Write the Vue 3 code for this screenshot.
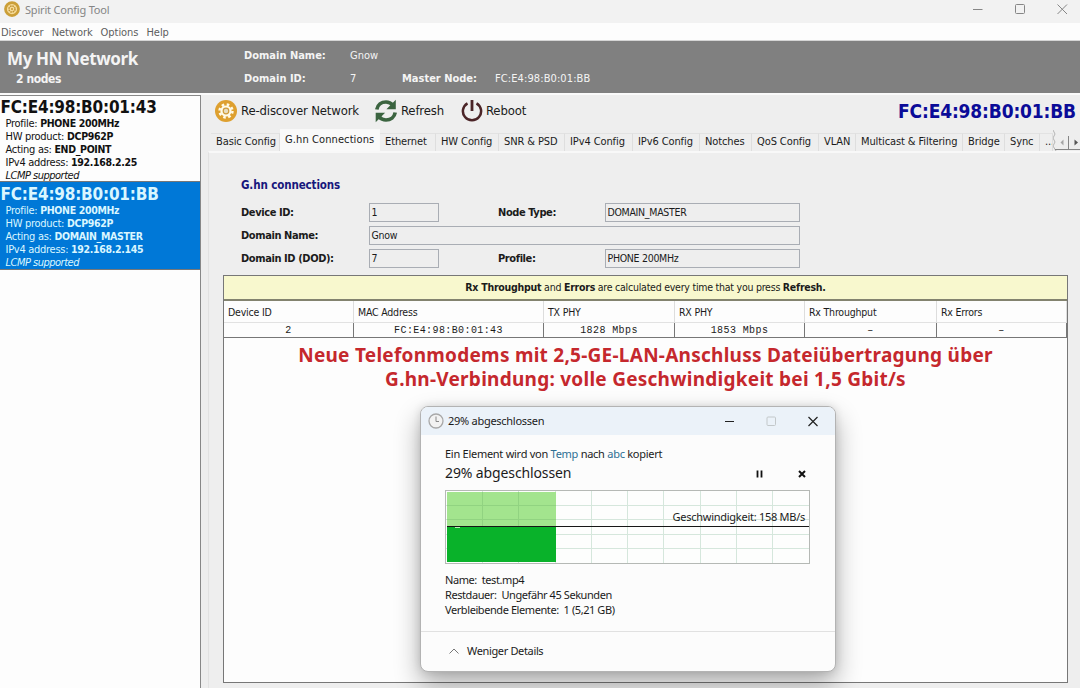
<script setup>
const menus = ['Discover', 'Network', 'Options', 'Help']

const nodes = [
  {
    mac: 'FC:E4:98:B0:01:43',
    role: 'END_POINT',
    ip: '192.168.2.25',
    selected: false,
  },
  {
    mac: 'FC:E4:98:B0:01:BB',
    role: 'DOMAIN_MASTER',
    ip: '192.168.2.145',
    selected: true,
  },
]

const tabs = [
  'Basic Config',
  'G.hn Connections',
  'Ethernet',
  'HW Config',
  'SNR & PSD',
  'IPv4 Config',
  'IPv6 Config',
  'Notches',
  'QoS Config',
  'VLAN',
  'Multicast & Filtering',
  'Bridge',
  'Sync',
  '...',
]
const activeTab = 'G.hn Connections'

const columns = ['Device ID', 'MAC Address', 'TX PHY', 'RX PHY', 'Rx Throughput', 'Rx Errors']
const connection = ['2', 'FC:E4:98:B0:01:43', '1828 Mbps', '1853 Mbps', '–', '–']
</script>

<template>
  <div class="window">
    <header class="titlebar">
      <svg class="app-icon" viewBox="0 0 32 32">
        <circle cx="16" cy="16" r="13" fill="#f6dc9c" stroke="#cb9f38" stroke-width="5.5" />
        <circle cx="16" cy="16" r="6" fill="none" stroke="#c09434" stroke-width="3" stroke-dasharray="3.2 1.5" />
        <circle cx="16" cy="16" r="2" fill="#c8982c" />
      </svg>
      <span class="title">Spirit Config Tool</span>
      <svg class="window-buttons" viewBox="0 0 100 12" fill="none" stroke="#868686">
        <path d="M1 6.5h9.5" />
        <rect x="43.5" y="1.5" width="9" height="9" rx="1" />
        <path d="M85.5 1.5l9.5 9.5M95 1.5l-9.5 9.5" />
      </svg>
    </header>

    <nav class="menubar">
      <span v-for="menu in menus" :key="menu">{{ menu }}</span>
    </nav>

    <section class="network">
      <div class="network-name">
        <h1>My HN Network</h1>
        <strong>2 nodes</strong>
      </div>
      <dl class="network-info">
        <dt>Domain Name:</dt>
        <dd>Gnow</dd>
        <dt class="row-two">Domain ID:</dt>
        <dd>7</dd>
        <dt>Master Node:</dt>
        <dd class="master">FC:E4:98:B0:01:BB</dd>
      </dl>
    </section>

    <div class="workspace">
      <aside class="node-list">
        <article v-for="node in nodes" :key="node.mac" class="node" :class="{ selected: node.selected }">
          <h2>{{ node.mac }}</h2>
          <p>Profile: <b>PHONE 200MHz</b></p>
          <p>HW product: <b>DCP962P</b></p>
          <p>Acting as: <b>{{ node.role }}</b></p>
          <p>IPv4 address: <b>{{ node.ip }}</b></p>
          <p class="lcmp">LCMP supported</p>
        </article>
      </aside>

      <main class="content">
        <div class="toolbar">
          <button type="button" class="discover">
            <svg width="24" height="24" viewBox="0 0 24 24">
              <circle cx="12" cy="12" r="11" fill="#dea02f" />
              <circle cx="12" cy="12" r="5.6" fill="#fffbe9" />
              <circle cx="12" cy="12" r="6.5" fill="none" stroke="#fffbe9" stroke-width="2.4" stroke-dasharray="2.55 2.55" />
              <circle cx="12" cy="12" r="2.8" fill="#e8ddc0" stroke="#cf9b3a" stroke-width="1.2" />
            </svg>
            <span>Re-discover Network</span>
          </button>
          <button type="button" class="refresh">
            <svg width="24" height="24" viewBox="0 0 24 24">
              <g fill="none" stroke="#3b6440" stroke-width="3.7">
                <path d="M2.8 10.5C3.6 5.8 7.4 3 12 3c3 0 5.2 1.2 7 3.2" />
                <path d="M21.2 13.5C20.4 18.2 16.6 21 12 21c-3 0-5.2-1.2-7-3.2" />
              </g>
              <path d="M21.8 0.8v9.4h-9.4zM1.7 23.2v-9.4h9.4z" fill="#3b6440" />
            </svg>
            <span>Refresh</span>
          </button>
          <button type="button" class="reboot">
            <svg width="22" height="24" viewBox="0 0 22 24" fill="none" stroke="#4b2427">
              <path d="M6.5 4.300a9.100 9.100 0 1 0 9 0" stroke-width="2.5" />
              <path d="M11 1v11" stroke-width="2.8" />
            </svg>
            <span>Reboot</span>
          </button>
          <strong class="current-mac">FC:E4:98:B0:01:BB</strong>
        </div>

        <div class="tabs">
          <span v-for="tab in tabs" :key="tab" class="tab" :class="{ active: tab === activeTab }">{{ tab }}</span>
          <svg class="tab-scroll" width="28" height="22" viewBox="0 0 28 22">
            <path d="M0 0l2 4-2 4 2 4-2 4 3 5" fill="none" stroke="#b5b5b5" />
            <path d="M2 19.500h26M15.500 6v13" fill="none" stroke="#858585" />
            <path d="M10.500 9.500v6l-3-3z" fill="#a5a5a5" />
            <path d="M21.500 9.500v6l3.500-3z" fill="#555" />
          </svg>
        </div>

        <div class="pane">
          <h3>G.hn connections</h3>
          <form class="details" @submit.prevent>
            <label>Device ID:</label>
            <output>1</output>
            <label class="second">Node Type:</label>
            <output>DOMAIN_MASTER</output>
            <label>Domain Name:</label>
            <output class="wide">Gnow</output>
            <label>Domain ID (DOD):</label>
            <output>7</output>
            <label class="second">Profile:</label>
            <output>PHONE 200MHz</output>
          </form>

          <section class="results">
            <p class="notice">
              <b>Rx Throughput</b> and <b>Errors</b> are calculated every time that you press <b>Refresh.</b>
            </p>
            <div class="grid head">
              <span v-for="column in columns" :key="column">{{ column }}</span>
            </div>
            <div class="grid row">
              <span v-for="(cell, index) in connection" :key="index">{{ cell }}</span>
            </div>
            <p class="caption">
              Neue Telefonmodems mit 2,5-GE-LAN-Anschluss Dateiübertragung über<br />
              G.hn-Verbindung: volle Geschwindigkeit bei 1,5 Gbit/s
            </p>
          </section>
        </div>
      </main>
    </div>

    <section class="dialog">
      <header class="dialog-title">
        <svg width="16" height="16" viewBox="0 0 16 16">
          <circle cx="8" cy="8" r="7" fill="#f2f2f2" stroke="#a8a8a8" stroke-width="1.3" />
          <path d="M8 3.5v5h3" fill="none" stroke="#8a8a8a" />
        </svg>
        <span>29% abgeschlossen</span>
        <svg class="dialog-buttons" width="96" height="12" viewBox="0 0 96 12" fill="none">
          <path d="M1 6.5h9" stroke="#222" />
          <rect x="43" y="2" width="8.5" height="8.5" rx="1" stroke="#c3c8ca" />
          <path d="M84.5 2l9 9M93.5 2l-9 9" stroke="#222" stroke-width="1.2" />
        </svg>
      </header>

      <div class="dialog-body">
        <p class="source">Ein Element wird von <a>Temp</a> nach <a>abc</a> kopiert</p>
        <div class="progress">
          <span>29% abgeschlossen</span>
          <svg width="52" height="10" viewBox="0 0 52 10" fill="none" stroke="#111">
            <path d="M1.5 1.5v7M5.5 1.5v7" stroke-width="1.8" />
            <path d="M43 2l6 6M49 2l-6 6" stroke-width="2" />
          </svg>
        </div>
        <div class="chart">
          <svg width="366" height="74" viewBox="0 0 366 74">
            <rect width="365" height="74" fill="#fdfefd" />
            <path
              d="M37.5 0v73M73.5 0v73M110.5 0v73M146.5 0v73M182.5 0v73M218.5 0v73M255.5 0v73M291.5 0v73M327.5 0v73M0 15.5h364M0 29.5h364M0 44.5h364M0 58.5h364"
              fill="none"
              stroke="#d5e7dc"
            />
            <rect x="2" y="2" width="109" height="35" fill="#a3e48e" />
            <path d="M37.5 2v35M73.5 2v35M2 15.5h109M2 29.5h109" stroke="#91d381" />
            <rect x="2" y="37" width="109" height="35" fill="#09b22a" />
            <rect x=".5" y=".5" width="364" height="73" fill="none" stroke="#b5b9b5" />
            <path d="M2 36.5h362" stroke="#161616" />
            <path d="M10 37.5h5" stroke="#b9efb9" />
          </svg>
          <span class="speed">Geschwindigkeit: 158 MB/s</span>
        </div>
        <div class="file-info">
          <p>Name:&nbsp; test.mp4</p>
          <p>Restdauer:&nbsp; Ungefähr 45 Sekunden</p>
          <p>Verbleibende Elemente:&nbsp; 1 (5,21 GB)</p>
        </div>
      </div>

      <footer class="dialog-footer">
        <svg width="10" height="6" viewBox="0 0 10 6">
          <path d="M.5 5.5L5 1l4.5 4.5" fill="none" stroke="#777" />
        </svg>
        <span>Weniger Details</span>
      </footer>
    </section>
  </div>
</template>

<style>
body {
  overflow: hidden;
}
</style>

<style scoped>
* {
  box-sizing: border-box;
}

h1,
h2,
h3,
p,
dl,
dd {
  margin: 0;
}

.window {
  position: relative;
  display: flex;
  flex-direction: column;
  width: 1080px;
  height: 688px;
  overflow: hidden;
  background: #eeeeee;
  color: #1b1b1b;
  font-family: 'DejaVu Sans Condensed', 'DejaVu Sans', sans-serif;
  font-size: 11px;
  font-stretch: condensed;
  white-space: nowrap;
}

.titlebar {
  display: flex;
  flex: none;
  align-items: center;
  height: 23px;
  padding: 0 8px 5px 4px;
  background: #f2f2f2;
}

.app-icon {
  width: 16px;
  height: 16px;
}

.title {
  margin-left: 5px;
  color: #858585;
  font-family: 'Noto Sans', sans-serif;
  font-size: 11px;
  letter-spacing: -0.2px;
}

.window-buttons {
  width: 100px;
  height: 12px;
  margin-left: auto;
}

.menubar {
  display: flex;
  flex: none;
  gap: 8px;
  height: 18px;
  padding-left: 1px;
  border-bottom: 1px solid #d5d5d5;
  background: #fdfdfd;
  color: #5e5e5e;
  letter-spacing: -0.05px;
  line-height: 19px;
}

.network {
  display: flex;
  flex: none;
  height: 52px;
  background: #808080;
  color: #f4f4f4;
}

.network-name {
  width: 244px;
  padding: 5px 0 0 7px;
}

h1 {
  font-family: 'Noto Sans', sans-serif;
  font-size: 17px;
  letter-spacing: -0.4px;
  line-height: 25px;
}

.network-name strong {
  display: block;
  padding-left: 9px;
  font-size: 12px;
  letter-spacing: -0.4px;
  line-height: 16px;
}

.network-info {
  display: grid;
  grid-template-columns: 106px 52px 93px auto;
  grid-auto-rows: 23px;
  padding-top: 3px;
  line-height: 23px;
}

.network-info dt {
  font-weight: 700;
}

.network-info .master {
  letter-spacing: 0.1px;
}

.row-two {
  grid-column: 1;
}

.workspace {
  display: flex;
  flex: 1;
  min-height: 0;
  border-top: 2px solid #fafafa;
}

.node-list {
  width: 201px;
  border-top: 1px solid #888;
  border-right: 1px solid #888;
  background: #fdfdfd;
}

.node {
  height: 86px;
  padding-left: 5.5px;
  border-bottom: 1px solid #777;
  color: #111;
  letter-spacing: -0.28px;
  line-height: 13px;
}

.node h2 {
  height: 21px;
  margin-left: -5px;
  font-size: 17px;
  letter-spacing: -0.2px;
  line-height: 22px;
}

.node b {
  font-size: 10.5px;
  letter-spacing: -0.33px;
}

.node.selected {
  height: 88px;
  padding-top: 1px;
  background: #0078d7;
  color: #d9f6ff;
}

.node .lcmp {
  font-style: italic;
  letter-spacing: -0.5px;
}

.content {
  display: flex;
  flex: 1;
  flex-direction: column;
  min-width: 0;
}

.toolbar {
  display: flex;
  align-items: center;
  height: 34px;
  padding: 0 4px 3px 13px;
}

.toolbar button {
  display: flex;
  align-items: center;
  gap: 3px;
  padding: 0;
  border: 0;
  background: none;
  color: #1b1b1b;
  font: inherit;
  font-size: 13px;
  letter-spacing: -0.15px;
}

.toolbar .refresh {
  margin-left: 15px;
}

.toolbar .reboot {
  margin-left: 17px;
}

.current-mac {
  margin-left: auto;
  color: #0b0b98;
  font-size: 19px;
  letter-spacing: -0.15px;
}

.tabs {
  display: grid;
  grid-template-columns: 69px 100px 56px 63px 66px 68px 67px 52px 67px 37px 107px 42px 35px 13px 28px;
  align-items: end;
  height: 22px;
  padding-left: 10px;
}

.tab {
  height: 19px;
  padding-left: 5px;
  overflow: hidden;
  border-top: 1px solid #e2e2e2;
  border-right: 1px solid #dedede;
  letter-spacing: -0.1px;
  line-height: 16px;
}

.tab.active {
  height: 23px;
  border-color: #f8f8f8;
  background: #f9f9f9;
  letter-spacing: 0.1px;
  line-height: 20px;
}

.tab-scroll {
  position: relative;
}

.pane {
  display: flex;
  flex: 1;
  flex-direction: column;
  margin-left: 7px;
  padding: 25px 12px 5px 14px;
  border-top: 2px solid #f8f8f8;
  border-left: 1px solid #e2e2e2;
}

h3 {
  margin-left: 18px;
  color: #17177c;
  font-size: 11.5px;
  letter-spacing: -0.12px;
  line-height: 15px;
}

.details {
  display: grid;
  grid-template-columns: 128px 70px 59px 107px 195px;
  grid-auto-rows: 19px;
  row-gap: 4px;
  margin: 10px 0 7px 18px;
  line-height: 19px;
}

.details label {
  font-weight: 700;
  letter-spacing: -0.4px;
}

.details .second {
  grid-column: 4;
}

.details output {
  padding-left: 1.5px;
  border: 1px solid #a9adb4;
  font-size: 10.5px;
  letter-spacing: -0.3px;
  line-height: 17px;
}

.details .wide {
  grid-column: 2 / -1;
}

.results {
  flex: 1;
  border: 1px solid #777;
  background: #fdfdfd;
}

.notice {
  height: 25px;
  border-bottom: 2px solid #83836f;
  background: #f8f8ce;
  font-size: 10.5px;
  letter-spacing: -0.24px;
  line-height: 23px;
  text-align: center;
}

.grid {
  display: grid;
  grid-template-columns: 130px 190px 131px 130px 132px 130px;
}

.head {
  height: 22px;
  border-bottom: 1px solid #e2e2e2;
  font-size: 10.5px;
  letter-spacing: -0.2px;
  line-height: 23px;
}

.head span {
  padding-left: 4px;
  border-right: 1px solid #ddd;
}

.row {
  height: 15px;
  border-bottom: 1px solid #777;
  font-family: 'Liberation Mono', monospace;
  font-size: 10px;
  letter-spacing: 0.4px;
  line-height: 15px;
  text-align: center;
}

.row span {
  border-right: 1px solid #777;
}

.caption {
  padding-top: 6px;
  color: #c5282d;
  font-family: 'Noto Sans', sans-serif;
  font-size: 19px;
  font-weight: 700;
  letter-spacing: 0.26px;
  line-height: 23.5px;
  text-align: center;
}

.dialog {
  position: absolute;
  top: 406px;
  left: 420px;
  display: flex;
  flex-direction: column;
  width: 416px;
  height: 266px;
  overflow: hidden;
  border: 1px solid #b3b3b3;
  border-radius: 8px;
  background: #fcfcfc;
  box-shadow: 0 12px 26px rgba(0, 0, 0, 0.32), 0 0 8px rgba(0, 0, 0, 0.12);
  font-family: 'Noto Sans', sans-serif;
  letter-spacing: -0.27px;
}

.dialog-title {
  display: flex;
  align-items: center;
  height: 28px;
  padding: 0 15px 1px 7px;
  background: #ebf2f9;
}

.dialog-title span {
  margin-left: 4px;
}

.dialog-buttons {
  margin-left: auto;
}

.dialog-body {
  height: 197px;
  padding: 11px 24px 0;
  border-bottom: 1px solid #e1e1e1;
}

.source {
  line-height: 15px;
}

.source a {
  color: #2e6f93;
}

.progress {
  display: flex;
  align-items: center;
  justify-content: space-between;
  height: 29px;
  padding: 0 3px 6px 0;
  font-size: 14px;
  letter-spacing: -0.12px;
}

.progress svg {
  margin-top: 2px;
}

.chart {
  position: relative;
  height: 73px;
}

.chart svg {
  display: block;
}

.speed {
  position: absolute;
  top: 19px;
  right: 6px;
  line-height: 16px;
}

.file-info {
  padding-top: 9px;
  letter-spacing: -0.42px;
  line-height: 15px;
}

.dialog-footer {
  display: flex;
  align-items: center;
  gap: 8px;
  height: 39px;
  padding: 0 0 2px 28px;
  letter-spacing: -0.35px;
}
</style>
